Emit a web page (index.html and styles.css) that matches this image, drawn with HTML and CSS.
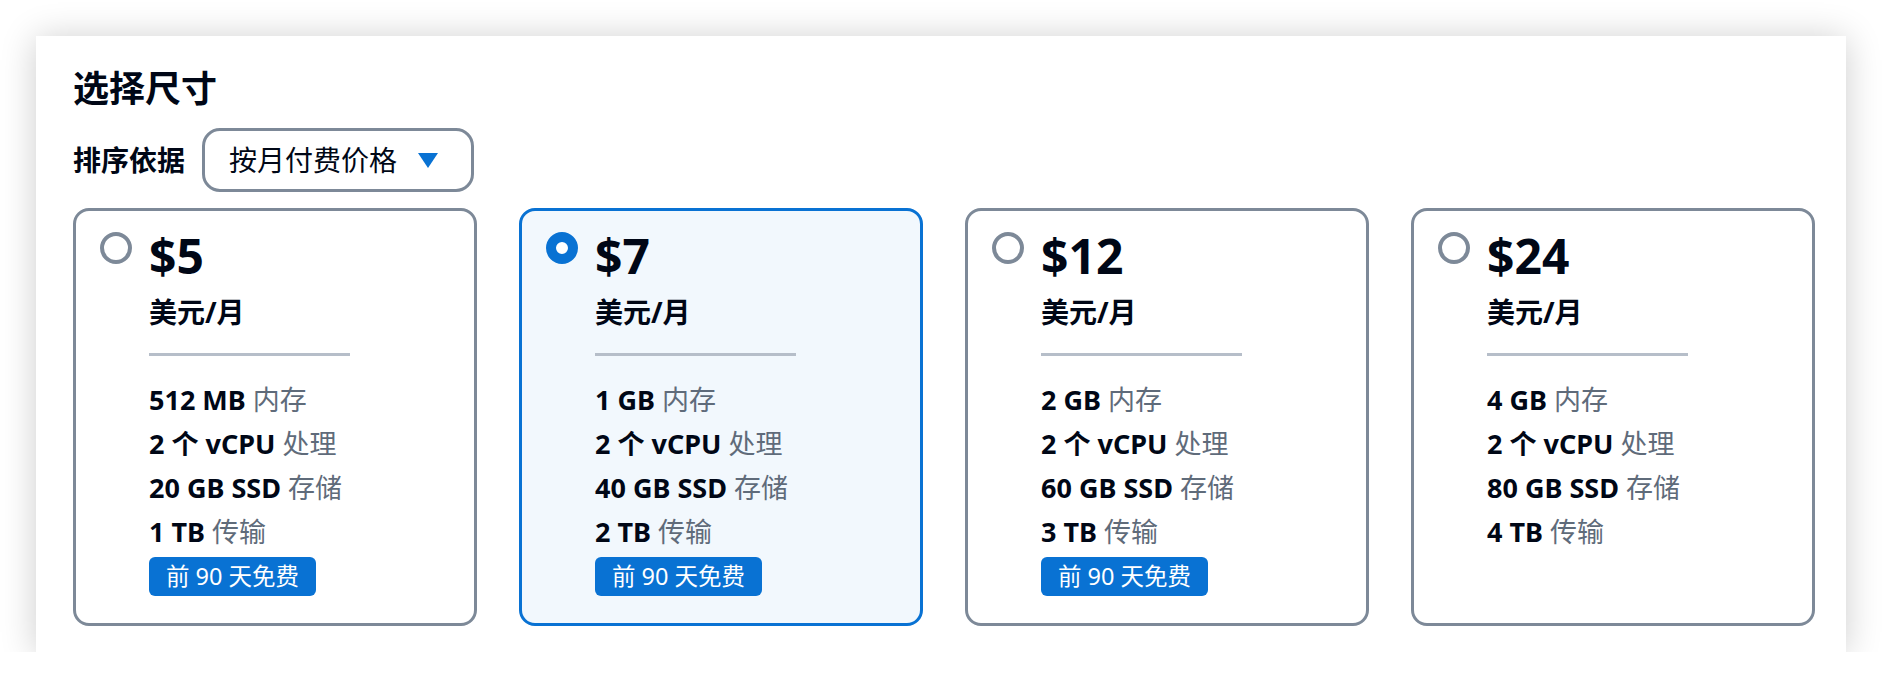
FILE: index.html
```html
<!DOCTYPE html>
<html lang="zh-CN">
<head>
<meta charset="utf-8">
<title>选择尺寸</title>
<link rel="stylesheet" href="styles.css">
</head>
<body>
<div class="page">
  <section class="panel">
    <h2 class="title">选择尺寸</h2>
    <div class="sort-row">
      <span class="sort-label">排序依据</span>
      <div class="select">
        <span class="select-text">按月付费价格</span>
        <svg class="caret" width="20" height="15" viewBox="0 0 20 15"><path d="M0 0 H20 L10 15 Z" fill="#0972d3"/></svg>
      </div>
    </div>
    <div class="cards">
      <div class="card">
        <span class="radio"></span>
        <div class="card-body">
          <div class="price">$5</div>
          <div class="unit">美元/月</div>
          <div class="divider"></div>
          <ul class="specs">
            <li><b>512 MB</b> 内存</li>
            <li><b>2 个 vCPU</b> 处理</li>
            <li><b>20 GB SSD</b> 存储</li>
            <li><b>1 TB</b> 传输</li>
          </ul>
          <span class="badge">前 90 天免费</span>
        </div>
      </div>
      <div class="card selected">
        <span class="radio checked"></span>
        <div class="card-body">
          <div class="price">$7</div>
          <div class="unit">美元/月</div>
          <div class="divider"></div>
          <ul class="specs">
            <li><b>1 GB</b> 内存</li>
            <li><b>2 个 vCPU</b> 处理</li>
            <li><b>40 GB SSD</b> 存储</li>
            <li><b>2 TB</b> 传输</li>
          </ul>
          <span class="badge">前 90 天免费</span>
        </div>
      </div>
      <div class="card">
        <span class="radio"></span>
        <div class="card-body">
          <div class="price">$12</div>
          <div class="unit">美元/月</div>
          <div class="divider"></div>
          <ul class="specs">
            <li><b>2 GB</b> 内存</li>
            <li><b>2 个 vCPU</b> 处理</li>
            <li><b>60 GB SSD</b> 存储</li>
            <li><b>3 TB</b> 传输</li>
          </ul>
          <span class="badge">前 90 天免费</span>
        </div>
      </div>
      <div class="card">
        <span class="radio"></span>
        <div class="card-body">
          <div class="price">$24</div>
          <div class="unit">美元/月</div>
          <div class="divider"></div>
          <ul class="specs">
            <li><b>4 GB</b> 内存</li>
            <li><b>2 个 vCPU</b> 处理</li>
            <li><b>80 GB SSD</b> 存储</li>
            <li><b>4 TB</b> 传输</li>
          </ul>
        </div>
      </div>
    </div>
  </section>
</div>
</body>
</html>
```
FILE: styles.css
```css
* { box-sizing: border-box; }
html, body {
  margin: 0;
  background: #ffffff;
}
body {
  font-family: "Noto Sans", "Noto Sans CJK SC", sans-serif;
  color: #000716;
}
.page {
  padding: 36px 0 0 36px;
}
.panel {
  width: 1810px;
  height: 616px;
  background: #ffffff;
  box-shadow: 0 2px 34px rgba(0, 0, 0, 0.2);
  padding: 31px 31px 26px 37px;
}
.title {
  margin: 0;
  font-size: 36px;
  line-height: 44px;
  font-weight: 600;
  color: #000716;
}
.sort-row {
  margin-top: 17px;
  display: flex;
  align-items: center;
  gap: 17px;
}
.sort-label {
  font-size: 28px;
  font-weight: 700;
  line-height: 36px;
}
.select {
  width: 272px;
  height: 64px;
  border: 3px solid #7d8998;
  border-radius: 18px;
  display: flex;
  align-items: center;
  padding: 0 30px 0 24px;
  gap: 21px;
}
.select-text {
  font-size: 28px;
  line-height: 36px;
  white-space: nowrap;
}
.caret { display: block; flex: none; }
.cards {
  margin-top: 16px;
  display: grid;
  grid-template-columns: repeat(4, 404px);
  gap: 42px;
}
.card {
  height: 418px;
  border: 3px solid #7d8998;
  border-radius: 16px;
  background: #ffffff;
  display: flex;
  align-items: flex-start;
  padding: 17px 0 0 24px;
  gap: 17px;
}
.card.selected {
  border-color: #0972d3;
  background: #f2f8fd;
}
.radio {
  flex: none;
  width: 32px;
  height: 32px;
  margin-top: 4px;
  border: 4px solid #7d8998;
  border-radius: 50%;
  background: #ffffff;
}
.radio.checked {
  border: 10px solid #0972d3;
}
.card-body {
  display: flex;
  flex-direction: column;
  align-items: flex-start;
}
.price {
  font-size: 48px;
  font-weight: 700;
  line-height: 56px;
}
.unit {
  margin-top: 10px;
  font-size: 28px;
  font-weight: 700;
  line-height: 36px;
}
.divider {
  margin-top: 23px;
  width: 201px;
  height: 3px;
  background: #b6bec9;
}
.specs {
  list-style: none;
  margin: 22px 0 0 0;
  padding: 0;
  font-size: 27px;
  line-height: 44px;
  color: #5f6b7a;
}
.specs b {
  color: #000716;
  font-weight: 700;
}
.badge {
  margin-top: 3px;
  height: 39px;
  padding: 0 17px;
  border-radius: 6px;
  background: #0972d3;
  color: #ffffff;
  font-size: 23.5px;
  line-height: 39px;
  white-space: nowrap;
}
```
